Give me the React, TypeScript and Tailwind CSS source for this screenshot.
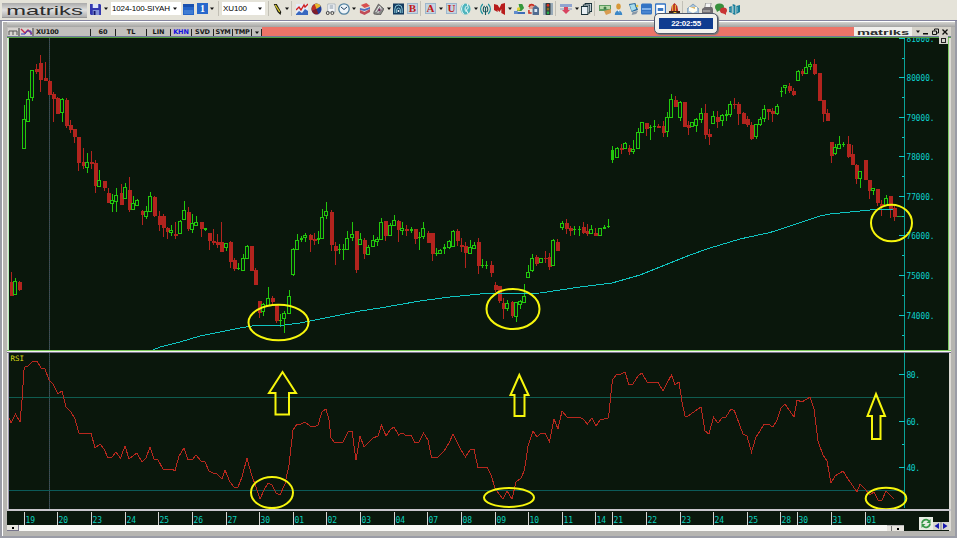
import React from 'react';

type Candle = [x: number, high: number, top: number, bottom: number, low: number, dir: 'u' | 'd' | 'f'];

// u = rising (hollow), d = falling, f = rising with a filled body
const CANDLES: Candle[] = [
  [11, 272, 282, 296, 296, 'd'], [15, 278, 281, 295, 295, 'u'], [19, 281, 282, 290, 291, 'd'],
  [24, 105, 119, 149, 149, 'u'], [28, 91, 99, 122, 122, 'u'], [32, 70, 70, 98, 101, 'u'],
  [36, 64, 69, 72, 74, 'd'], [40, 55, 63, 80, 92, 'd'], [45, 62, 78, 81, 81, 'd'],
  [49, 80, 81, 95, 95, 'd'], [53, 92, 94, 99, 122, 'd'], [57, 97, 98, 114, 114, 'd'],
  [62, 98, 99, 113, 122, 'u'], [66, 98, 100, 126, 128, 'd'], [70, 120, 125, 130, 133, 'd'],
  [74, 129, 129, 137, 143, 'd'], [78, 137, 137, 163, 171, 'd'], [83, 148, 162, 166, 169, 'd'],
  [87, 153, 162, 168, 173, 'u'], [91, 151, 162, 164, 169, 'd'], [95, 160, 163, 186, 193, 'd'],
  [99, 170, 180, 187, 187, 'u'], [104, 181, 181, 188, 191, 'd'], [108, 188, 193, 203, 203, 'd'],
  [112, 194, 200, 204, 212, 'u'], [116, 188, 195, 202, 212, 'u'], [121, 184, 193, 205, 205, 'd'],
  [125, 183, 187, 199, 199, 'u'], [129, 177, 190, 210, 212, 'd'], [133, 196, 203, 210, 210, 'u'],
  [137, 199, 200, 206, 206, 'u'], [142, 210, 211, 215, 225, 'd'], [146, 206, 211, 217, 219, 'u'],
  [150, 192, 196, 212, 212, 'u'], [154, 196, 197, 216, 217, 'd'], [159, 211, 216, 225, 231, 'd'],
  [163, 214, 216, 228, 237, 'd'], [167, 227, 228, 232, 239, 'd'], [171, 225, 230, 233, 236, 'u'],
  [175, 222, 234, 236, 239, 'd'], [180, 220, 221, 234, 234, 'u'], [184, 201, 210, 220, 220, 'u'],
  [188, 207, 212, 229, 231, 'd'], [192, 214, 223, 230, 233, 'u'], [196, 216, 222, 226, 226, 'u'],
  [201, 222, 222, 229, 237, 'd'], [205, 228, 228, 230, 231, 'u'], [209, 233, 233, 241, 250, 'd'],
  [213, 229, 241, 243, 245, 'd'], [217, 234, 242, 245, 248, 'd'], [221, 222, 242, 252, 252, 'd'],
  [226, 243, 243, 248, 251, 'u'], [230, 241, 242, 262, 268, 'd'], [234, 258, 260, 269, 271, 'd'],
  [238, 263, 268, 269, 270, 'u'], [243, 254, 258, 271, 271, 'u'], [247, 245, 246, 259, 259, 'u'],
  [251, 246, 246, 271, 271, 'd'], [255, 268, 270, 285, 285, 'd'], [259, 301, 301, 313, 318, 'd'],
  [263, 303, 304, 312, 316, 'u'], [268, 287, 298, 306, 306, 'u'], [272, 296, 298, 302, 305, 'd'],
  [276, 305, 305, 321, 323, 'd'], [280, 314, 320, 321, 327, 'u'], [284, 311, 313, 319, 333, 'u'],
  [289, 290, 296, 314, 314, 'u'], [293, 248, 249, 275, 276, 'u'], [297, 234, 240, 250, 250, 'u'],
  [301, 236, 238, 240, 242, 'u'], [305, 233, 235, 238, 242, 'u'], [310, 234, 235, 240, 252, 'd'],
  [314, 233, 239, 241, 245, 'd'], [318, 231, 238, 240, 244, 'u'], [322, 209, 217, 239, 239, 'u'],
  [326, 202, 211, 216, 219, 'u'], [331, 210, 212, 245, 251, 'd'], [335, 242, 246, 251, 265, 'd'],
  [339, 244, 249, 250, 254, 'u'], [343, 244, 249, 250, 260, 'u'], [347, 231, 238, 250, 250, 'u'],
  [352, 222, 234, 238, 241, 'u'], [356, 231, 231, 270, 273, 'd'], [360, 233, 239, 245, 245, 'u'],
  [364, 238, 240, 254, 259, 'd'], [368, 245, 247, 255, 255, 'u'], [373, 235, 240, 247, 247, 'u'],
  [377, 237, 239, 242, 246, 'u'], [381, 218, 222, 240, 240, 'u'], [385, 221, 221, 236, 241, 'd'],
  [390, 223, 225, 236, 236, 'u'], [394, 215, 220, 226, 226, 'u'], [398, 220, 221, 230, 242, 'd'],
  [402, 222, 228, 231, 235, 'u'], [406, 225, 229, 231, 236, 'd'], [411, 227, 229, 231, 233, 'u'],
  [415, 229, 229, 239, 244, 'd'], [419, 232, 237, 238, 250, 'u'], [423, 222, 228, 237, 239, 'u'],
  [428, 231, 233, 243, 243, 'd'], [432, 233, 233, 254, 261, 'd'], [436, 248, 253, 254, 256, 'u'],
  [440, 249, 250, 254, 254, 'u'], [444, 244, 247, 249, 254, 'u'], [449, 240, 241, 248, 249, 'u'],
  [453, 230, 231, 247, 247, 'u'], [457, 229, 231, 241, 246, 'd'], [461, 238, 245, 247, 252, 'd'],
  [465, 242, 246, 253, 268, 'd'], [470, 240, 247, 254, 254, 'u'], [474, 242, 245, 249, 249, 'u'],
  [478, 238, 242, 266, 274, 'd'], [482, 259, 265, 266, 268, 'u'], [486, 261, 265, 266, 269, 'u'],
  [491, 261, 265, 273, 277, 'd'], [495, 282, 285, 290, 292, 'd'], [499, 286, 286, 301, 303, 'd'],
  [503, 298, 303, 309, 319, 'd'], [507, 300, 303, 309, 311, 'u'], [512, 301, 302, 316, 318, 'd'],
  [516, 302, 302, 317, 322, 'u'], [520, 300, 301, 305, 309, 'u'], [524, 284, 296, 303, 303, 'u'],
  [528, 265, 272, 278, 278, 'u'], [532, 254, 258, 271, 272, 'u'], [536, 255, 257, 264, 266, 'd'],
  [541, 258, 258, 263, 263, 'u'], [545, 251, 258, 259, 263, 'd'], [549, 253, 257, 267, 270, 'd'],
  [553, 239, 240, 266, 266, 'u'], [557, 239, 242, 251, 251, 'd'], [562, 221, 223, 228, 230, 'u'],
  [566, 219, 223, 229, 234, 'd'], [570, 226, 228, 231, 236, 'd'], [574, 226, 229, 230, 235, 'u'],
  [579, 226, 229, 230, 236, 'u'], [583, 222, 227, 233, 234, 'd'], [587, 224, 231, 234, 236, 'd'],
  [591, 225, 229, 234, 234, 'u'], [595, 228, 233, 236, 236, 'd'], [600, 228, 228, 236, 236, 'u'],
  [604, 225, 227, 229, 229, 'u'], [608, 219, 226, 227, 228, 'u'], [612, 146, 150, 160, 163, 'f'],
  [617, 147, 148, 158, 158, 'u'], [621, 144, 148, 150, 154, 'd'], [625, 142, 143, 149, 149, 'u'],
  [629, 145, 148, 152, 155, 'd'], [633, 140, 149, 152, 154, 'u'], [638, 128, 132, 149, 149, 'u'],
  [642, 122, 122, 133, 133, 'u'], [646, 123, 123, 129, 136, 'd'], [650, 125, 127, 128, 140, 'u'],
  [654, 120, 126, 127, 132, 'u'], [658, 124, 126, 128, 128, 'd'], [663, 121, 126, 133, 137, 'd'],
  [667, 112, 117, 132, 137, 'u'], [671, 94, 99, 118, 118, 'u'], [675, 96, 100, 107, 107, 'd'],
  [680, 101, 102, 118, 121, 'u'], [684, 102, 102, 127, 127, 'd'], [688, 121, 125, 128, 135, 'd'],
  [692, 122, 122, 127, 127, 'u'], [696, 118, 119, 126, 132, 'u'], [701, 108, 113, 120, 123, 'u'],
  [705, 104, 113, 135, 139, 'd'], [709, 129, 134, 137, 145, 'd'], [713, 111, 116, 124, 124, 'u'],
  [717, 111, 117, 122, 128, 'd'], [722, 114, 115, 121, 126, 'u'], [726, 110, 114, 116, 121, 'u'],
  [730, 101, 104, 115, 117, 'u'], [734, 98, 104, 105, 109, 'd'], [738, 102, 104, 114, 125, 'd'],
  [743, 112, 113, 124, 124, 'd'], [747, 116, 119, 125, 127, 'd'], [751, 122, 125, 139, 140, 'd'],
  [756, 124, 124, 137, 139, 'u'], [760, 117, 119, 125, 126, 'u'], [764, 105, 109, 119, 122, 'u'],
  [768, 109, 109, 112, 120, 'd'], [772, 108, 111, 114, 122, 'd'], [777, 104, 106, 114, 115, 'u'],
  [781, 87, 91, 92, 97, 'u'], [785, 85, 85, 88, 94, 'u'], [789, 83, 86, 91, 93, 'd'],
  [793, 88, 91, 95, 96, 'd'], [798, 70, 71, 81, 81, 'u'], [802, 69, 71, 74, 76, 'd'],
  [806, 60, 67, 74, 74, 'u'], [810, 62, 64, 67, 70, 'u'], [814, 59, 64, 74, 75, 'd'],
  [819, 73, 73, 101, 101, 'd'], [823, 100, 100, 114, 122, 'd'], [827, 109, 113, 121, 121, 'd'],
  [831, 142, 142, 156, 163, 'd'], [835, 144, 147, 154, 155, 'u'], [839, 136, 144, 149, 149, 'u'],
  [843, 142, 144, 145, 147, 'u'], [848, 136, 144, 157, 158, 'd'], [852, 145, 154, 165, 165, 'd'],
  [856, 164, 165, 179, 184, 'd'], [860, 171, 171, 179, 188, 'u'], [865, 160, 160, 180, 180, 'd'],
  [869, 180, 180, 191, 199, 'd'], [873, 188, 188, 191, 195, 'u'], [877, 189, 189, 203, 206, 'd'],
  [881, 200, 204, 207, 216, 'd'], [886, 195, 198, 206, 206, 'u'], [890, 196, 196, 209, 218, 'd'],
  [894, 206, 208, 217, 221, 'd'],
];

const MOVING_AVERAGE =
  '153,350 160,347 180,342 200,336 220,332 240,328 255,325.5 285,325 300,323 320,319 345,314 360,311 380,308 400,304.5 420,301 450,297 480,294 500,293.5 540,293 560,290 580,287 600,284.5 612,283 640,275 660,267 690,255 710,248 740,239 770,232.5 790,226 820,216 830,214 850,212 870,210 893,209.5';

const RSI =
  '8,415 11,423 15.5,414 20,422 22,400 24,370 25,367 28,366 33,361 37,361 41,368 45,369 49,380 53,384 58,394 62,391 66,407 71,412 75,419 79,433 83,434 87,433.5 91,433 95,448 100,444 104,449 108,458 112,457 116,452 120.5,458 125,446 129,459 137,453 142,462 146,458 150,447 154,459 158,460 163,469 167,470 172,469 175,471 179,456 184,448 188,460 193,459 196,455 201,461 205,462 209,471 213,473 217,474 222,479 225,470 230,482 234,487 238,487 242,477 247,458 251,473 256,487 260,499 264,490 268,483 272,485 276,493 280,495 285,484 289,465 293,430 297,424 301,424 305,422 310,426 314,427 318,425 322,412 326,409 329,420 331,438 335,443 343,442 348,432 352,431 356,460 360,436 364,447 373,438 378,436 381.5,425 386,436 390,430 394,427 398.5,435 402,433 407,436 411,435 415,443 419,442 423.5,433 428,440 431.5,457 438,457 444,451 449,443 453,434 457,442 461,450 465.5,457 470,450 474,449 478,468 487,467 491,475 495,488 499,494 503,499 507,491 512,499 516,482 521,478 524.5,470 528,446 533,431 537,437 541,433 545,433 549.5,442 554,419 558,429 562,411 567,417 579,417 583,419 587.5,424 592,418 596,426 600,420 608.5,418 611,393 612.5,380 616,375 621,374 625,372 629,385 633,384 638,376 642,373 647,382 658,382 663,391 667,383 671.5,375 675,385 679,382 682,402 685,416 688,416 701,407 705,431 709,434 713.5,417 718,423 722,418 726,417 731,409 734.5,411 743,434 747,436 751.5,452 756,437 760,431 764,424 768,424 773,427 777,420 781,408 785,404 794,417 797,400 802,402 810,397 814,409 818,441 823,455 827,461 831,483 835,476 843,471 848,479 857,492 860,484 865,489 870,495 874,492 878,500 882,500 886,491 890,495 894,499';

const PRICES = [
  { y: 38, label: '81000.' },
  { y: 77, label: '80000.' },
  { y: 117, label: '79000.' },
  { y: 156, label: '78000.' },
  { y: 196, label: '77000.' },
  { y: 235, label: '76000.' },
  { y: 275, label: '75000.' },
  { y: 315, label: '74000.' },
];

const DATES: [number, string][] = [
  [24, '19'], [57, '20'], [91, '23'], [125, '24'], [158, '25'], [192, '26'], [226, '27'], [259, '30'],
  [293, '01'], [326, '02'], [360, '03'], [394, '04'], [427, '07'], [461, '08'], [495, '09'], [528, '10'],
  [562, '11'], [595, '14'], [612, '21'], [646, '22'], [680, '23'], [713, '24'], [747, '25'], [780, '28'],
  [797, '30'], [831, '31'], [865, '01'],
];

const AXIS_FONT = "font-['DejaVu_Sans_Mono',monospace]";

const CandleMark = ({ candle }: { candle: Candle }) => {
  const [x, high, top, bottom, low, dir] = candle;
  const height = Math.max(1, bottom - top);
  if (dir === 'd') {
    return (
      <g fill="#b2241e">
        <rect x={x} y={high} width={1} height={low - high} />
        <rect x={x - 1} y={top} width={4} height={height} />
      </g>
    );
  }
  const color = '#22c80c';
  return (
    <g fill={color}>
      <rect x={x} y={high} width={1} height={Math.max(0, top - high)} />
      <rect x={x} y={bottom} width={1} height={Math.max(0, low - bottom)} />
      {dir === 'f' || height < 3 ? (
        <rect x={x - 1} y={top} width={3} height={height} />
      ) : (
        <>
          <rect x={x - 2} y={top} width={4} height={height} />
          <rect x={x - 1} y={top + 1} width={2} height={height - 2} fill="#0a1c10" />
        </>
      )}
    </g>
  );
};

const Crosshair = ({ y1, y2 }: { y1: number; y2: number }) => (
  <g strokeWidth={1} shapeRendering="crispEdges">
    <line x1={49.5} x2={49.5} y1={y1} y2={y2} stroke="#28524e" />
    <line x1={49.5} x2={49.5} y1={y1} y2={y2} stroke="#4c4454" strokeDasharray="1 1" />
  </g>
);

const PriceChart = () => (
  <svg width={939} height={312} viewBox="9 38 939 312" className="block bg-[#0a170c]">
    <Crosshair y1={38} y2={350} />
    <g shapeRendering="crispEdges">
      {CANDLES.map((candle) => (
        <CandleMark key={candle[0]} candle={candle} />
      ))}
      <rect x={897} y={216} width={5} height={1} fill="#22a83c" />
      <polyline points={MOVING_AVERAGE} fill="none" stroke="#10c4c0" strokeWidth={1} />
      <rect x={904} y={38} width={1} height={312} fill="#0aa398" />
      {PRICES.map(({ y, label }) => (
        <g key={label} fill="#0cc6c4">
          <rect x={899} y={y} width={6} height={1} />
          <rect x={902} y={y + 20} width={2} height={1} />
        </g>
      ))}
    </g>
    <g fill="#0cd0cc" className={`${AXIS_FONT} text-[8px]`}>
      {PRICES.map(({ y, label }) => (
        <text key={label} x={906.5} y={y + 3.5} textLength={28} lengthAdjust="spacingAndGlyphs">{label}</text>
      ))}
    </g>
    <g fill="none" stroke="#f6f60c" strokeWidth={2}>
      <ellipse cx={278.5} cy={322.5} rx={30} ry={17.7} />
      <ellipse cx={513} cy={309} rx={26.5} ry={20} />
      <ellipse cx={891.5} cy={223} rx={20.5} ry={18.3} />
    </g>
  </svg>
);

const RsiChart = () => (
  <svg width={939} height={156} viewBox="9 353 939 156" className="block bg-[#0a170c]">
    <Crosshair y1={353} y2={509} />
    <g shapeRendering="crispEdges">
      <rect x={9} y={397} width={895} height={1} fill="#0f5c50" />
      <rect x={9} y={490} width={895} height={1} fill="#0b5a58" />
      <polyline points={RSI} fill="none" stroke="#b8281e" strokeWidth={1} />
      <rect x={904} y={353} width={1} height={155} fill="#0aa398" />
      <g fill="#0cc6c4">
        <rect x={899} y={374} width={6} height={1} />
        <rect x={899} y={421} width={6} height={1} />
        <rect x={902} y={444} width={2} height={1} />
        <rect x={899} y={467} width={6} height={1} />
      </g>
    </g>
    <g fill="#0cd0cc" className={`${AXIS_FONT} text-[8px]`}>
      <text x={906.5} y={377.5} textLength={13.5}>80.</text>
      <text x={906.5} y={424.5} textLength={13.5}>60.</text>
      <text x={906.5} y={470.5} textLength={13.5}>40.</text>
    </g>
    <text x={10.5} y={361} textLength={13.5} fill="#dede18" className={`${AXIS_FONT} text-[7.5px]`}>RSI</text>
    <g fill="none" stroke="#f6f60c" strokeWidth={2}>
      <ellipse cx={272} cy={492.5} rx={21} ry={15.6} />
      <ellipse cx={509} cy={497.5} rx={25} ry={9.4} />
      <ellipse cx={886} cy={498.5} rx={20.3} ry={10.7} />
      <path d="M282.5 372 L296 393 H289 V414.5 H275.5 V393 H269 Z" />
      <path d="M519.3 375 L528.5 395 H524.5 V416 H514.5 V395 H510.5 Z" />
      <path d="M876 394 L885 416 H880.5 V439 H872 V416 H867.5 Z" />
    </g>
  </svg>
);

const TimeAxis = () => (
  <svg width={942} height={14} viewBox="7 511 942 14" className="block bg-[#0a170c]">
    {DATES.map(([x, label]) => (
      <g key={x}>
        <rect x={x} y={512} width={1} height={13} fill="#d4d4d0" />
        <text x={x + 1.5} y={523} textLength={9.5} fill="#0cd0be" className={`${AXIS_FONT} text-[8px]`}>{label}</text>
      </g>
    ))}
  </svg>
);

/* ---- toolbar ---- */

const Logo = ({ width, height, size }: { width: number; height: number; size: number }) => (
  <svg width={width} height={height} className="block shrink-0 overflow-visible">
    <text
      x={width * 0.05}
      y={height * 0.84}
      textLength={width * 0.9}
      lengthAdjust="spacingAndGlyphs"
      fontSize={size}
      fill="#2c2c2c"
      className="font-['Liberation_Sans',Arial,sans-serif]"
    >
      matriks
    </text>
  </svg>
);

const Caret = ({ className = '' }: { className?: string }) => (
  <svg width={4} height={3} viewBox="0 0 4 3" className={`shrink-0 ${className}`}>
    <path d="M0 0.5H4L2 3Z" fill="#111" />
  </svg>
);

const Divider = ({ className = '' }: { className?: string }) => (
  <div className={`h-[15px] w-px shrink-0 bg-[#c2c0b6] ${className}`} />
);

const Icon = ({ w = 11, className = '', children }: { w?: number; className?: string; children: React.ReactNode }) => (
  <svg width={w} height={12} viewBox="0 0 12 12" preserveAspectRatio="none" className={`shrink-0 ${className}`}>
    {children}
  </svg>
);

const LetterIcon = ({ letter, className }: { letter: string; className: string }) => (
  <div
    className={`flex h-[11px] w-[11px] shrink-0 items-center justify-center border border-[#9cb6cc] bg-[#c4d4e0] font-['Liberation_Serif',serif] text-[11px] leading-none font-bold text-[#c01818] ${className}`}
  >
    {letter}
  </div>
);

const Toolbar = () => (
  <div className="flex h-5 items-center bg-[#e5e3d9] pb-[3px] pl-0.5 font-['Liberation_Sans',Arial,sans-serif] text-[8px] leading-none text-black">
    <div className="mt-[3px] shrink-0 border-b border-[#999] bg-linear-to-b from-[#aaa] via-[#e0e0e0] to-[#b0b0b0]">
      <Logo width={85} height={14} size={13} />
    </div>
    <Icon className="ml-[3px]">
      <path d="M0 1H11L12 2V12H1L0 11Z" fill="#3438b0" />
      <path d="M3 1H9V5H3Z" fill="#dce4f8" />
      <path d="M3 7H10V12H3Z" fill="#8494d8" />
      <path d="M4 8H6V12H4Z" fill="#16186c" />
    </Icon>
    <Caret className="ml-[3px]" />
    <div className="ml-[3px] flex h-[13px] w-[70px] shrink-0 items-center justify-between bg-white pr-1 pl-[1px]">
      <span className="tracking-[-0.15px] whitespace-nowrap">1024-100-SIYAH</span>
      <Caret />
    </div>
    <Icon className="ml-[2px]">
      <rect y={1} width={12} height={11} fill="#2464c8" />
      <path d="M0 1H12V4H0Z" fill="#1850b0" />
      <path d="M1 8H11M1 10H11" stroke="#6098e0" />
    </Icon>
    <div className="ml-[3px] flex h-[11px] w-[11px] shrink-0 items-center justify-center bg-[#2868cc] font-['Liberation_Serif',serif] text-[10px] font-bold text-white">1</div>
    <Caret className="ml-[2px]" />
    <Divider className="ml-[4px]" />
    <div className="ml-[3px] flex h-[13px] w-[43px] shrink-0 items-center justify-between bg-white pr-[3px] pl-[1px]">
      <span className="tracking-[-0.1px]">XU100</span>
      <Caret />
    </div>
    <Divider className="ml-[3px]" />
    <Icon w={9} className="ml-[4px]">
      <path d="M1 1L5 1L11 9L10 12L6 9Z" fill="#181810" />
      <path d="M3 2L9 9" stroke="#d8c830" strokeWidth={1.6} />
    </Icon>
    <Caret className="ml-[3px]" />
    <Divider className="ml-[2px]" />
    <Icon w={12} className="ml-[4px]">
      <rect y={1} width={12} height={11} fill="#e4ecf8" />
      <path d="M0 7L3 4L5 7L8 2L9 4L12 1" stroke="#d02020" strokeWidth={1.4} fill="none" />
      <path d="M0 11L3 8L6 10L9 6L12 8V12H0Z" fill="#3868c0" />
    </Icon>
    <Icon className="ml-[3px]">
      <circle cx={6} cy={6} r={5.5} fill="#203c98" />
      <path d="M6 6V0.5A5.5 5.5 0 0 0 1 8Z" fill="#c03020" />
      <path d="M6 6L10.8 3A5.5 5.5 0 0 0 4 1Z" fill="#e8b830" />
      <path d="M6 6L1 8A5.5 5.5 0 0 0 8 11Z" fill="#801c28" />
    </Icon>
    <Icon className="ml-[3px]">
      <path d="M3 1H11V9H3Z" fill="#f4f6f8" stroke="#98a4b0" strokeWidth={0.7} />
      <path d="M5 3H9M5 5H9" stroke="#8090a0" />
      <circle cx={3} cy={10} r={1.6} fill="none" stroke="#444" />
      <circle cx={8} cy={10} r={1.6} fill="none" stroke="#444" />
    </Icon>
    <Icon w={12} className="ml-[2px]">
      <circle cx={6} cy={6} r={5.2} fill="#eef4f8" stroke="#5080a0" strokeWidth={1.3} />
      <path d="M3 4L6 6.5L9 4" stroke="#204060" fill="none" />
    </Icon>
    <Caret className="ml-[2px]" />
    <Icon className="ml-[3px]">
      <path d="M2 2L8 0L12 3L6 5Z" fill="#d85050" />
      <path d="M1 5L6 6L12 4V6L6 8L1 7Z" fill="#5070c0" />
      <path d="M1 7L6 9L12 6V9L6 12L1 10Z" fill="#c04c58" />
    </Icon>
    <Icon className="ml-[3px]">
      <path d="M1 9L6 1L12 6L8 12L1 11Z" fill="#888" stroke="#444" strokeWidth={0.7} />
      <path d="M3 9L7 3L9 6L5 10" stroke="#eee" fill="none" />
      <circle cx={7} cy={7} r={1.3} fill="#7c3060" />
    </Icon>
    <Caret className="ml-[3px]" />
    <Icon className="ml-[2px]">
      <rect y={0.5} width={12} height={11} fill="#143c60" />
      <path d="M2 10V6A4 4 0 0 1 10 6V10M4 10V7A2 2 0 0 1 8 7V10" stroke="#8cccdc" fill="none" />
      <circle cx={6} cy={8} r={1} fill="#fff" />
    </Icon>
    <LetterIcon letter="B" className="ml-[3px]" />
    <Divider className="ml-[2px]" />
    <LetterIcon letter="A" className="ml-[4px]" />
    <Caret className="ml-[3px]" />
    <LetterIcon letter="U" className="ml-[3px]" />
    <Icon className="ml-[3px]">
      <circle cx={6} cy={6} r={5.5} fill="#50b4bc" />
      <path d="M4 1C1 4 1 8 4 11M7 3C5 5 5 7 7 9M8 1L9 5L7 7L9 11" stroke="#f0ffff" fill="none" />
    </Icon>
    <Caret className="ml-[3px]" />
    <Icon className="ml-[2px]">
      <path d="M3 1C0 4 0 8 3 11M9 1C12 4 12 8 9 11" stroke="#18909c" strokeWidth={1.4} fill="none" />
      <path d="M5 3C3 5 3 8 5 9M7 3C9 5 9 8 7 9M6 4V12" stroke="#185860" strokeWidth={1.2} fill="none" />
    </Icon>
    <Icon className="ml-[3px]">
      <path d="M0 1L4 2L6 5L8 1L12 0V12L8 10V6L6 9L4 7V9L0 7Z" fill="#b81c1c" />
    </Icon>
    <Caret className="ml-[3px]" />
    <Icon className="ml-[2px]">
      <rect x={1} y={9} width={11} height={2} fill="#3c6cb8" />
      <path d="M5 1H9L11 5L8 8H3L6 5Z" fill="#34983c" />
      <circle cx={5} cy={6} r={1.8} fill="#e0d030" />
      <path d="M0 8H4V11H0Z" fill="#608ccc" />
    </Icon>
    <Icon className="ml-[3px]">
      <path d="M1 1H6V6H1Z" fill="#e0a090" />
      <path d="M1 4C2 1 5 1 7 3M1 7V10H4" stroke="#c82c20" strokeWidth={1.6} fill="none" />
      <path d="M5 5L8 2L12 5V12H5Z" fill="#506c90" />
      <path d="M7 6H10V9H7Z" fill="#dce8f4" />
    </Icon>
    <Icon w={10} className="ml-[4px]">
      <rect x={0} width={12} height={12} fill="#98aab8" />
      <rect x={3} width={6} height={12} rx={1} fill="#303c40" />
      <circle cx={6} cy={2.3} r={1.5} fill="#d83020" />
      <circle cx={6} cy={6} r={1.5} fill="#887020" />
      <circle cx={6} cy={9.7} r={1.5} fill="#28b048" />
    </Icon>
    <Divider className="ml-[2px]" />
    <Icon w={12} className="ml-[4px]">
      <rect width={12} height={3} y={1} fill="#90a4d0" />
      <rect y={5} width={12} height={2} fill="#b8bccc" />
      <path d="M4 4H8V7H10L6 11L2 7H4Z" fill="#d84460" />
    </Icon>
    <Caret className="ml-[3px]" />
    <Icon className="ml-[2px]">
      <g fill="#e8f0f4" stroke="#183038">
        <rect x={4.5} y={0.5} width={7} height={8} />
        <rect x={2.5} y={2} width={7} height={8} />
        <rect x={0.5} y={3.5} width={7} height={8} />
      </g>
    </Icon>
    <Divider className="ml-[2px]" />
    <Icon w={12} className="ml-[4px]">
      <rect y={2} width={12} height={6} fill="#5c9c60" />
      <rect x={1} y={3} width={10} height={3} fill="#b8d8a8" />
      <circle cx={6} cy={5} r={1.5} fill="#3c7c48" />
      <path d="M5 8L12 6V10L7 12Z" fill="#d89c50" />
    </Icon>
    <Icon w={9} className="ml-[3px]">
      <circle cx={6} cy={3.5} r={3} fill="#d89838" />
      <path d="M1 12C1 6 11 6 11 12Z" fill="#3c88c8" />
      <path d="M5 7H7V10Z" fill="#fff" />
    </Icon>
    <Icon className="ml-[5px]">
      <path d="M1 1L8 0L11 7L4 9Z" fill="#2c6ca0" />
      <path d="M2 2L7 1L9 6L4 8Z" fill="#a8dcec" />
      <path d="M5 9L11 8L9 11L4 12Z" fill="#8898a8" />
      <circle cx={10} cy={3} r={1.3} fill="#e0c040" />
    </Icon>
    <Icon className="ml-[2px]">
      <rect y={0.5} width={12} height={11} rx={1.5} fill="#3474c4" />
      <path d="M1 5H11V7H1Z" fill="#80b0e8" />
      <path d="M1 9H11" stroke="#6098dc" />
    </Icon>
    <Icon className="ml-[3px]">
      <rect x={0.5} y={1} width={11} height={10.5} rx={1} fill="#fff" stroke="#3474c4" strokeWidth={1.6} />
      <path d="M3 5H9V8H3Z" fill="#3c78c4" />
    </Icon>
    <Icon className="ml-[3px]">
      <path d="M6 0L9 3L10 8H2L3 3Z" fill="#b83024" />
      <path d="M4 2V8M7 2V8" stroke="#f0c040" />
      <rect x={0} y={8} width={12} height={3} fill="#402018" />
      <rect x={5} y={9} width={3} height={3} fill="#e8c030" />
    </Icon>
    <Divider className="ml-[2px]" />
    <Icon w={12} className="ml-[4px]">
      <path d="M0 6L6 1L12 6V12H0Z" fill="#a8c4dc" stroke="#688cac" strokeWidth={0.7} />
      <path d="M2 4H10V8L6 10L2 8Z" fill="#fffdf0" />
      <path d="M3 4H8V6Z" fill="#e0b868" />
    </Icon>
    <Icon className="ml-[3px]">
      <path d="M4 0H10L9 5H3Z" fill="#f4f4f4" stroke="#777" strokeWidth={0.7} />
      <path d="M0 6L3 4H11L12 6V10L9 12H0Z" fill="#706c70" />
      <path d="M1 8H9" stroke="#ccc" />
    </Icon>
    <Icon w={12} className="ml-[2px]">
      <ellipse cx={4.5} cy={4} rx={4.5} ry={3.5} fill="#38903c" />
      <path d="M1 6L2 9L5 7Z" fill="#38903c" />
      <ellipse cx={8.5} cy={7.5} rx={3.5} ry={3} fill="#c83434" />
      <path d="M8 10L11 12L11 8Z" fill="#c83434" />
    </Icon>
    <Icon className="ml-[2px]">
      <path d="M0 4L3 3V10L0 9ZM4 1L7 2V12L4 11ZM8 3L12 2V9L8 11Z" fill="#1c7c98" />
      <path d="M1 5V8M5 3V10M9 4V9" stroke="#74c4d4" strokeWidth={0.8} />
    </Icon>
  </div>
);

/* ---- window chrome ---- */

const Tab = ({ className, children }: { className: string; children: React.ReactNode }) => (
  <div className={`flex h-[7px] shrink-0 items-center justify-center border-r border-[#222] ${className}`}>{children}</div>
);

const TitleBar = () => (
  <div className="flex h-[9px] items-end bg-[#c2c0bd] font-['DejaVu_Sans',Verdana,sans-serif] text-[6.5px] leading-[7px] font-bold text-[#181818]">
    <svg width={27} height={8} viewBox="0 0 27 8" className="ml-px shrink-0">
      <rect width={26} height={8} fill="#d8d4d0" />
      <path d="M1 7V3H9V7M5 3V7" stroke="#555" fill="none" />
      <path d="M11 0V8M25 0V8" stroke="#333" />
      <path d="M13 1L17 5L20 2L24 6" stroke="#c82848" strokeWidth={1.3} fill="none" />
      <path d="M13 6H17L19 3H23V7" stroke="#3838c0" fill="none" />
    </svg>
    <Tab className="w-[56px] justify-start! pl-px"><span className="tracking-[-0.3px]">XU100</span></Tab>
    <Tab className="w-[25px]">60</Tab>
    <Tab className="w-[31px]">TL</Tab>
    <Tab className="w-6">LIN</Tab>
    <Tab className="w-[21px] tracking-[-0.1px] text-[#1414e0]">KHN</Tab>
    <Tab className="w-[22px] tracking-[-0.1px]">SVD</Tab>
    <Tab className="w-[19px] tracking-[-0.3px]">SYM</Tab>
    <Tab className="w-[19px] tracking-[-0.2px]">TMP</Tab>
    <Tab className="w-[10px]"><Caret /></Tab>
    <div className="h-full flex-1 bg-[#ec7468]" />
    <div className="h-full bg-[#f0efec]">
      <Logo width={58} height={9} size={8} />
    </div>
    <div className="flex h-full w-[39px] items-center justify-between bg-[#d6d3ca] pr-[3px] pl-1">
      <Caret />
      <svg width={5} height={7}><rect y={5} width={5} height={1.5} fill="#111" /></svg>
      <svg width={7} height={7} fill="none" stroke="#111">
        <path d="M2.5 2.5V1H6.5V5H5M0.5 3H4.5V6.5H0.5Z" />
      </svg>
      <svg width={6} height={6}><path d="M0.5 0.5L5.5 5.5M5.5 0.5L0.5 5.5" stroke="#111" strokeWidth={1.3} /></svg>
    </div>
  </div>
);

const ScrollBar = () => (
  <div className="flex h-1.5 w-[942px] bg-[#0a170c]">
    <div className="flex w-[897px] justify-between bg-[#f8f8f5]">
      <div className="flex w-3 items-center justify-center border-r border-b border-[#77758c] bg-[#e8e6e0]">
        <div className="h-0.5 w-0.5 bg-black" />
      </div>
      <div className="flex w-[17px] border-t border-[#bbb] bg-[#e8e6e0]">
        <div className="w-[5px] border-r border-[#777]" />
        <div className="flex flex-1 items-center justify-center">
          <div className="h-0.5 w-0.5 bg-black" />
        </div>
      </div>
    </div>
  </div>
);

const PageButtons = () => (
  <div className="absolute right-[8px] bottom-[8px] flex items-end">
    <svg width={14} height={13} viewBox="0 0 14 13">
      <rect width={14} height={13} fill="#e8ece4" />
      <path d="M3 6.5A4 4 0 0 1 10 4M11 6.5A4 4 0 0 1 4 9" stroke="#389848" strokeWidth={1.7} fill="none" />
      <path d="M11.5 2V6H7.5ZM2.5 11V7H6.5Z" fill="#389848" />
    </svg>
    <svg width={16} height={8} viewBox="0 0 16 8">
      <rect width={16} height={8} fill="#d8d6d0" />
      <path d="M8 0V8" stroke="#888" />
      <path d="M6 1V7L1.5 4ZM10 1V7L14.5 4Z" fill="#1818b0" />
    </svg>
  </div>
);

const Clock = () => (
  <div className="absolute top-[13px] left-[654px] flex h-[21px] w-[64px] items-center justify-center rounded-[5px] border-[1.5px] border-[#505868] bg-[#f2f2ee] shadow-[1px_1px_1px_#777]">
    <div className="flex h-[11px] w-[54px] items-center justify-center bg-[#103c90] font-['Liberation_Sans',Arial,sans-serif] text-[8px] leading-none font-bold tracking-[-0.3px] text-white">
      22:02:55
    </div>
  </div>
);

export default function App() {
  return (
    <div className="relative flex h-[538px] w-[957px] flex-col overflow-hidden bg-[#e5e3d9]">
      <Toolbar />
      <div className="h-px bg-[#8484a0]" />
      <div className="flex flex-1 border-x-2 border-b-2 border-[#9a9ca6]">
        <div className="flex-1 border-t border-l border-white bg-[#b6b5b1] pl-1">
          <div className="h-[5px] bg-linear-to-b from-[#d4d4d0] to-[#a4a4a2]" />
          <div className="w-[944px]">
            <TitleBar />
            <div className="h-px bg-[#70789c]" />
            <div className="h-px bg-[#54a040]" />
            <div className="flex border-r-2 border-[#dcdad4]">
              <div className="w-px bg-[#e4e4de]" />
              <div className="w-px bg-[#b4e8b8]" />
              <PriceChart />
              <div className="w-px bg-[#7cc864]" />
            </div>
            <div className="h-px bg-[#7cc85c]" />
            <div className="h-px bg-[#f4f4f0]" />
            <div className="h-px bg-[#78708c]" />
            <div className="flex border-r-2 border-[#dcdad4]">
              <div className="w-px bg-[#e4e4de]" />
              <div className="w-px bg-[#9c98b0]" />
              <RsiChart />
              <div className="w-px bg-[#0a170c]" />
            </div>
            <div className="h-0.5 bg-[#c8c6cc]" />
            <div className="border-r-2 border-[#dcdad4]">
              <TimeAxis />
              <ScrollBar />
            </div>
          </div>
        </div>
      </div>
      <PageButtons />
      <Clock />
      {/* scroll handle in the corner of the price panel */}
      <div className="absolute top-9 left-[939px] flex h-[8px] w-[9px] items-center justify-center bg-[#d4d2cc]">
        <div className="h-[5px] w-[5px] border border-[#222]" />
      </div>
    </div>
  );
}
